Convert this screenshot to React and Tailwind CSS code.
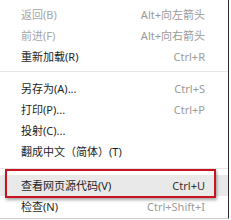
const font = { fontFamily: '"Noto Sans", "Noto Sans CJK SC", sans-serif' };

function Item({ label, shortcut, disabled, active }) {
  return (
    <div
      className={`flex items-center justify-between h-[21px] pl-[21px] pr-[23px] text-[11px] ${
        active ? 'bg-[#e9e9e9]' : ''
      }`}
    >
      <span className={disabled ? 'text-[#a6a6a6]' : 'text-[#1e1e1e]'}>{label}</span>
      {shortcut && (
        <span className={active ? 'text-[#333]' : 'text-[#9a9a9a]'}>{shortcut}</span>
      )}
    </div>
  );
}

export default function App() {
  return (
    <div className="w-[231px] h-[220px] bg-white overflow-hidden" style={font}>
      <div className="relative w-[229px] h-[219px] border-r border-[#2a2a2a] border-b border-b-[#d0d0d0] pt-[4px] leading-none">
        <Item label="返回(B)" shortcut="Alt+向左箭头" disabled />
        <Item label="前进(F)" shortcut="Alt+向右箭头" disabled />
        <Item label="重新加载(R)" shortcut="Ctrl+R" />
        <div className="h-px bg-[#e6e6e6] mt-[4px] mb-[6px]" />
        <Item label="另存为(A)..." shortcut="Ctrl+S" />
        <Item label="打印(P)..." shortcut="Ctrl+P" />
        <Item label="投射(C)..." />
        <Item label="翻成中文（简体）(T)" />
        <div className="h-px bg-[#e6e6e6] mt-[6px] mb-[6px]" />
        <Item label="查看网页源代码(V)" shortcut="Ctrl+U" active />
        <Item label="检查(N)" shortcut="Ctrl+Shift+I" />
        {/* annotation box */}
        <div className="absolute left-[5px] top-[169px] w-[211px] h-[29px] border-2 border-[#c8141e] shadow-[1px_2px_3px_rgba(0,0,0,0.35)]" />
      </div>
    </div>
  );
}
